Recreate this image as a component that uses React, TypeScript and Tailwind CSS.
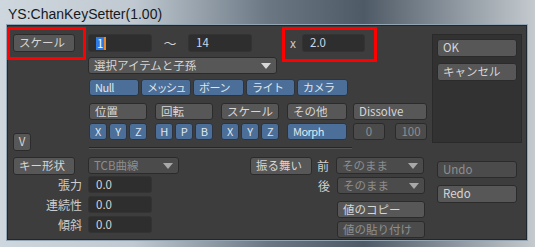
import React from "react";

const font = "font-['Noto_Sans_CJK_JP','Noto_Sans',sans-serif]";

type BtnProps = {
  className?: string;
  children?: React.ReactNode;
  dim?: boolean;
  center?: boolean;
};

function Btn({ className = "", children, dim, center }: BtnProps) {
  return (
    <div
      className={`flex items-center rounded-[3px] border border-[#2b2b2b] text-[11.5px] leading-none whitespace-nowrap ${
        dim ? "bg-[#4b4b4b] text-[#8e8e8e]" : "bg-[#575757] text-[#d6d6d6]"
      } ${center ? "justify-center" : "pl-[5px]"} ${className}`}
    >
      {children}
    </div>
  );
}

function Blue({ className = "", children, center }: BtnProps) {
  return (
    <div
      className={`flex items-center overflow-hidden rounded-[3px] border border-[#2b3440] bg-[#4b6f98] text-[11px] tracking-[-0.5px] leading-none text-[#dfe6ee] whitespace-nowrap ${
        center ? "justify-center" : "pl-[5px]"
      } ${className}`}
    >
      {children}
    </div>
  );
}

function Arrow({ dim }: { dim?: boolean }) {
  return (
    <svg width="10" height="6" viewBox="0 0 10 6" className="ml-auto mr-[5px] shrink-0">
      <path d="M0 0 L10 0 L5 6 Z" fill={dim ? "#a8a8a8" : "#d8d8d8"} />
    </svg>
  );
}

function Field({ className = "", children }: BtnProps) {
  return (
    <div className={`flex items-center rounded-[3px] bg-[#2e2e2e] border border-[#333] pl-[7px] text-[11.5px] leading-none ${className}`}>
      {children}
    </div>
  );
}

export default function App() {
  return (
    <div
      className={`w-[535px] h-[247px] overflow-hidden bg-[linear-gradient(90deg,#cfd7de_0%,#c0c9d1_25%,#6b7884_50%,#4e5a66_68%,#8d969f_85%,#c4cace_100%)] ${font}`}
    >
      <div className="h-[25px] pl-[8px] pt-[3px] flex items-center font-['Liberation_Sans',sans-serif] text-[14px] text-[#151a1f]">
        YS:ChanKeySetter(1.00)
      </div>
      <div className="ml-[7px] w-[520px] h-[215px] bg-[#3d3d3d] border border-[#1f2830] shadow-[0_0_0_1px_#93a5b3] flex items-start">
        {/* left and middle */}
        <div className="w-[419px] flex flex-col">
          <div className="h-[126px] flex">
            <div className="w-[80px] flex flex-col pt-[8px] pl-[5px] pb-[1px]">
              <div className="relative w-[62px]">
                <Btn className="w-[62px] h-[18px]">スケール</Btn>
                <div className="absolute -left-[6px] -top-[7px] -right-[11px] -bottom-[8px] border-[3px] border-[#ff0000]" />
              </div>
              <Btn center className="mt-auto w-[18px] h-[18px]">V</Btn>
            </div>
            <div className="flex flex-col pt-[8px]">
              <div className="flex h-[18px] items-stretch">
                <Field className="w-[64px]">
                  <span className="bg-[#2f7be6] text-white px-[1px] leading-[13px]">1</span>
                  <span className="w-[2px] h-[13px] bg-[#e88a2c]" />
                </Field>
                <div className="w-[36px] flex items-center justify-center text-[13px] text-[#d0d0d0]">〜</div>
                <Field className="w-[64px] text-[#c8d8ea]">14</Field>
                <div className="relative ml-[36px] flex items-stretch">
                  <span className="w-[14px] flex items-center pl-[2px] text-[12px] text-[#c8c8c8]">x</span>
                  <Field className="w-[63px] text-[#c8d8ea]">2.0</Field>
                  <div className="absolute -left-[6px] -top-[7px] -right-[12px] -bottom-[10px] border-[3px] border-[#ff0000]" />
                </div>
              </div>
              <Btn className="mt-[5px] w-[189px] h-[17px]">
                選択アイテムと子孫
                <Arrow />
              </Btn>
              <div className="mt-[5px] flex gap-[2px] h-[17px] pl-[1px]">
                <Blue className="w-[50px]">Null</Blue>
                <Blue className="w-[50px]">
                  <span className="tracking-[-1.5px]">メッシュ</span>
                </Blue>
                <Blue className="w-[51px]">ボーン</Blue>
                <Blue className="w-[49px]">ライト</Blue>
                <Blue className="w-[51px]">カメラ</Blue>
              </div>
              <div className="mt-[7px] flex h-[17px] pl-[1px]">
                <Btn className="w-[58px]">位置</Btn>
                <Btn className="ml-[8px] w-[58px]">回転</Btn>
                <Btn className="ml-[8px] w-[58px]">スケール</Btn>
                <Btn className="ml-[8px] w-[60px]">その他</Btn>
                <Btn className="ml-[6px] w-[74px]">Dissolve</Btn>
              </div>
              <div className="mt-[3px] flex h-[17px] pl-[1px]">
                <div className="flex gap-[2px]">
                  <Blue center className="w-[18px]">X</Blue>
                  <Blue center className="w-[18px]">Y</Blue>
                  <Blue center className="w-[18px]">Z</Blue>
                </div>
                <div className="ml-[8px] flex gap-[2px]">
                  <Blue center className="w-[18px]">H</Blue>
                  <Blue center className="w-[18px]">P</Blue>
                  <Blue center className="w-[18px]">B</Blue>
                </div>
                <div className="ml-[8px] flex gap-[2px]">
                  <Blue center className="w-[18px]">X</Blue>
                  <Blue center className="w-[18px]">Y</Blue>
                  <Blue center className="w-[18px]">Z</Blue>
                </div>
                <Blue className="ml-[8px] w-[60px]">Morph</Blue>
                <Btn dim center className="ml-[6px] w-[32px]">0</Btn>
                <Btn dim center className="ml-[10px] w-[32px]">100</Btn>
              </div>
              <div className="mt-[7px] ml-[1px] w-[263px] border-t border-[#262626] border-b border-b-[#555]" />
            </div>
          </div>

          <div className="mt-[5px] flex items-stretch h-[18px]">
            <Btn className="ml-[5px] w-[62px]">キー形状</Btn>
            <Btn dim className="ml-[13px] w-[91px] h-[17px]">
              TCB曲線
              <Arrow dim />
            </Btn>
            <Btn className="ml-[71px] w-[62px]">振る舞い</Btn>
            <span className="ml-[5px] w-[19px] flex items-center text-[12px] text-[#d0d0d0]">前</span>
            <Btn dim className="w-[88px] h-[17px]">
              そのまま
              <Arrow dim />
            </Btn>
          </div>
          <div className="flex">
            <div className="flex flex-col">
              {["張力", "連続性", "傾斜"].map((label, i) => (
                <div key={label} className={`flex h-[17px] ${i === 0 ? "mt-[1px]" : "mt-[3px]"}`}>
                  <span className="w-[74px] flex items-center justify-end text-[12px] text-[#cccccc]">{label}</span>
                  <Field className="ml-[6px] w-[64px] text-[#d6d6d6]">0.0</Field>
                </div>
              ))}
            </div>
            <div className="ml-[166px] flex flex-col">
              <div className="mt-[2px] flex h-[17px]">
                <span className="w-[19px] flex items-center text-[12px] text-[#d0d0d0]">後</span>
                <Btn dim className="w-[88px]">
                  そのまま
                  <Arrow dim />
                </Btn>
              </div>
              <Btn className="mt-[7px] ml-[19px] w-[88px] h-[17px]">値のコピー</Btn>
              <Btn dim className="mt-[3px] ml-[19px] w-[88px] h-[17px]">値の貼り付け</Btn>
            </div>
          </div>
        </div>

        {/* right column */}
        <div className="ml-[5px] w-[90px] flex flex-col">
          <div className="mt-[8px] h-[109px] bg-[#323232] border border-[#2a2a2a] flex flex-col px-[4px] pt-[4px] gap-[6px]">
            <Btn className="w-[80px] h-[18px]">OK</Btn>
            <Btn className="w-[80px] h-[18px]">キャンセル</Btn>
          </div>
          <Btn dim className="mt-[18px] ml-[5px] w-[80px] h-[17px]">Undo</Btn>
          <Btn className="mt-[7px] ml-[5px] w-[80px] h-[18px]">Redo</Btn>
        </div>
      </div>
    </div>
  );
}
